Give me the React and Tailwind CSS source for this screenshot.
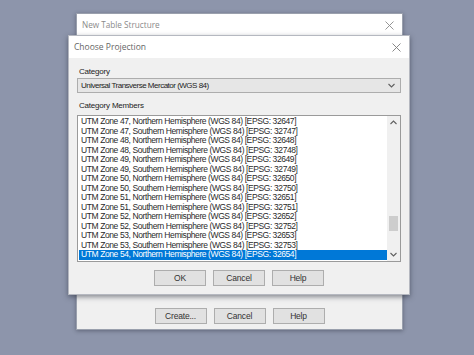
import React from "react"

const rows = [
  "UTM Zone 47, Northern Hemisphere (WGS 84) [EPSG: 32647]",
  "UTM Zone 47, Southern Hemisphere (WGS 84) [EPSG: 32747]",
  "UTM Zone 48, Northern Hemisphere (WGS 84) [EPSG: 32648]",
  "UTM Zone 48, Southern Hemisphere (WGS 84) [EPSG: 32748]",
  "UTM Zone 49, Northern Hemisphere (WGS 84) [EPSG: 32649]",
  "UTM Zone 49, Southern Hemisphere (WGS 84) [EPSG: 32749]",
  "UTM Zone 50, Northern Hemisphere (WGS 84) [EPSG: 32650]",
  "UTM Zone 50, Southern Hemisphere (WGS 84) [EPSG: 32750]",
  "UTM Zone 51, Northern Hemisphere (WGS 84) [EPSG: 32651]",
  "UTM Zone 51, Southern Hemisphere (WGS 84) [EPSG: 32751]",
  "UTM Zone 52, Northern Hemisphere (WGS 84) [EPSG: 32652]",
  "UTM Zone 52, Southern Hemisphere (WGS 84) [EPSG: 32752]",
  "UTM Zone 53, Northern Hemisphere (WGS 84) [EPSG: 32653]",
  "UTM Zone 53, Southern Hemisphere (WGS 84) [EPSG: 32753]",
  "UTM Zone 54, Northern Hemisphere (WGS 84) [EPSG: 32654]",
]

const Close = ({ className }) => (
  <svg width="9" height="9" viewBox="0 0 9 9" className={className} fill="none" stroke="currentColor" strokeWidth="0.9">
    <path d="M0.5 0.5L8.5 8.5M8.5 0.5L0.5 8.5" />
  </svg>
)

const Chevron = ({ up }) => (
  <svg width="7" height="5" viewBox="0 0 7 5" fill="none" stroke="#606060" strokeWidth="1.1">
    <path d={up ? "M0.5 4L3.5 1L6.5 4" : "M0.5 1L3.5 4L6.5 1"} />
  </svg>
)

function Btn({ children }) {
  return (
    <button className="w-[52px] h-[16px] bg-[#e1e1e1] border border-[#adadad] text-[8.5px] tracking-[-0.2px] text-[#333] leading-none">
      {children}
    </button>
  )
}

export default function App() {
  return (
    <div className="relative w-[474px] h-[355px] bg-[#8d95ab] overflow-hidden" style={{ fontFamily: '"Liberation Sans", Arial, sans-serif' }}>
      {/* back window */}
      <div className="absolute left-[76px] top-[13px] w-[327px] h-[317px] flex flex-col bg-[#f0f0f0] shadow-[0_1px_4px_rgba(40,45,60,0.45)] border border-[#9aa0ad]">
        <div className="h-[22px] bg-white flex items-center justify-between pl-[5px] pr-[8px] shrink-0">
          <span className="text-[8.2px] text-[#8a8a8a]" style={{ fontFamily: '"Open Sans", sans-serif' }}>New Table Structure</span>
          <Close className="text-[#8a8a8a]" />
        </div>
        <div className="flex-1" />
        <div className="flex justify-center gap-[7px] pb-[5px]">
          <Btn>Create...</Btn>
          <Btn>Cancel</Btn>
          <Btn>Help</Btn>
        </div>
      </div>

      {/* front window */}
      <div className="absolute left-[68px] top-[35px] w-[342px] h-[260px] flex flex-col bg-[#f0f0f0] shadow-[0_2px_5px_rgba(30,35,50,0.5)] border border-[#b5b8c0]">
        <div className="h-[22px] bg-white flex items-center justify-between pl-[5px] pr-[8px] shrink-0">
          <span className="text-[8.5px] text-[#666]" style={{ fontFamily: '"Open Sans", sans-serif' }}>Choose Projection</span>
          <Close className="text-[#7a7a7a]" />
        </div>
        <div className="flex flex-col px-[8px] pt-[9px] text-[#222]">
          <div className="text-[8px] tracking-[-0.2px] leading-[10px] pl-[2px]">Category</div>
          <div className="mt-[1px] h-[15px] bg-[#e6e6e6] border border-[#adadad] flex items-center justify-between pl-[3px] pr-[5px]">
            <span className="text-[8px] tracking-[-0.5px] leading-none">Universal Transverse Mercator (WGS 84)</span>
            <Chevron />
          </div>
          <div className="mt-[8px] text-[8px] tracking-[-0.2px] leading-[10px] pl-[2px]">Category Members</div>
          <div className="mt-[4px] h-[147px] bg-white border border-[#9a9a9a] flex">
            <div className="flex-1 pt-[1px] pl-[1px]">
              {rows.map((r, i) => (
                <div
                  key={i}
                  className={
                    i === rows.length - 1
                      ? "h-[9.5px] leading-[9.5px] text-[8.5px] tracking-[-0.4px] pl-[2px] bg-[#0078d7] text-white whitespace-nowrap"
                      : "h-[9.5px] leading-[9.5px] text-[8.5px] tracking-[-0.4px] pl-[2px] text-[#2a2a2a] whitespace-nowrap"
                  }
                >
                  {r}
                </div>
              ))}
            </div>
            <div className="w-[13px] bg-[#f0f0f0] flex flex-col items-center justify-between py-[4px]">
              <Chevron up />
              <div className="flex-1 w-full relative">
                <div className="absolute left-[2px] right-[2px] top-[91px] h-[15px] bg-[#cdcdcd]" />
              </div>
              <Chevron />
            </div>
          </div>
          <div className="flex justify-center gap-[7px] mt-[8px]">
            <Btn>OK</Btn>
            <Btn>Cancel</Btn>
            <Btn>Help</Btn>
          </div>
        </div>
      </div>
    </div>
  )
}
